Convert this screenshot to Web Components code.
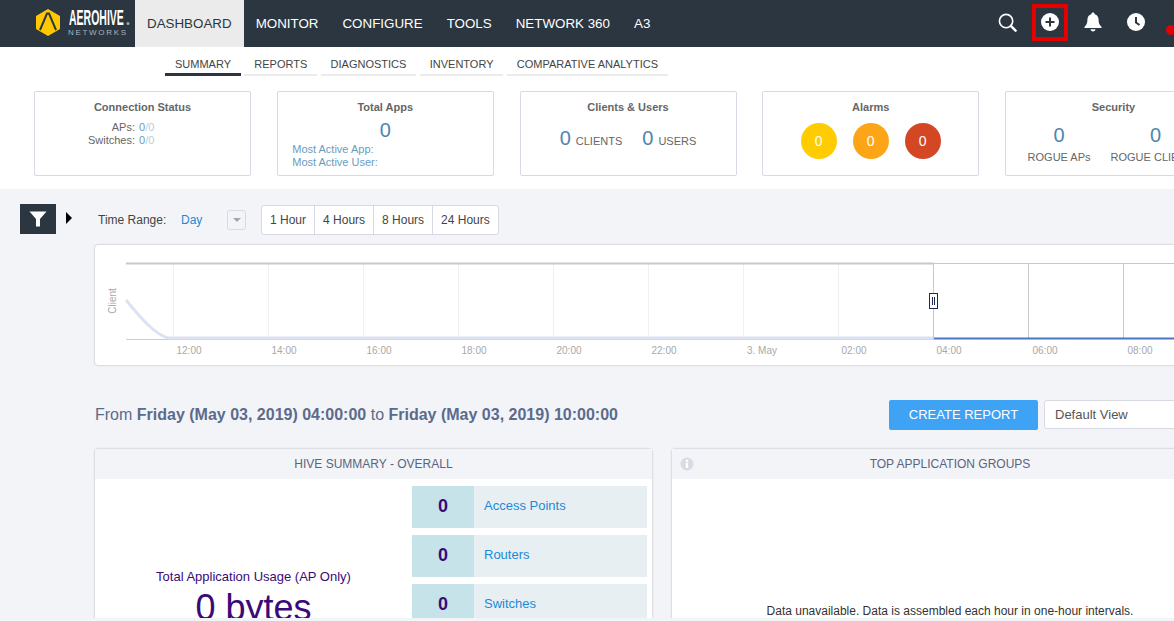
<!DOCTYPE html>
<html>
<head>
<meta charset="utf-8">
<title>Dashboard</title>
<style>
    html, body { margin: 0; height: 100%; overflow: hidden; }
    body { font-family: "Liberation Sans", Arial, sans-serif; background: #f3f4f8; }
</style>
</head>
<body>
<hive-app></hive-app>

<script>
class TopBar extends HTMLElement {
    constructor() {
        super();
        this.attachShadow({ mode: 'open' });
        this.shadowRoot.innerHTML = `
            <style>
                :host { display: flex; height: 47px; background: #2b3640; align-items: stretch; }
                .logo { width: 135px; flex: none; }
                .logo svg { display: block; }
                nav { display: flex; }
                a {
                    padding: 0 12px;
                    color: #fff;
                    font-size: 13.37px;
                    line-height: 47px;
                    white-space: nowrap;
                }
                a.on { background: #ebebeb; color: #2b3640; }
                .icons { margin-left: auto; display: flex; align-items: center; }
                .icon { width: 43px; display: flex; justify-content: center; align-items: center; height: 47px; box-sizing: border-box; padding-bottom: 3px; }
                .icon.marked { position: relative; }
                .icon.marked::after {
                    content: '';
                    position: absolute;
                    left: 3.5px; top: 4px;
                    width: 36px; height: 37px;
                    box-sizing: border-box;
                    border: 4px solid #e60000;
                }
                .dot { width: 16.5px; height: 47px; position: relative; overflow: hidden; }
                .dot::after {
                    content: '';
                    position: absolute;
                    left: 8.5px; top: 25px;
                    width: 10px; height: 10px;
                    border-radius: 50%;
                    background: #e60000;
                }
            </style>
            <div class="logo">
                <svg width="135" height="47" viewBox="0 0 135 47">
                    <polygon points="48,9 60,16 60,29 48,36 36,29 36,16" fill="#ffc800"/>
                    <path d="M40 30 L47 13.5 H49 L56 30" fill="none" stroke="#2b3640" stroke-width="2"/>
                    <text transform="translate(69 25) scale(1.05 2.2)" fill="#fff" font-family="Liberation Sans" font-weight="bold" font-size="10">AEROHIVE</text>
                    <circle cx="128" cy="23.5" r="1.5" fill="#9aa"/>
                    <text x="68" y="35" fill="#aeb3b8" font-family="Liberation Sans" font-size="8" letter-spacing="1.7">NETWORKS</text>
                </svg>
            </div>
            <nav>
                <a class="on">DASHBOARD</a>
                <a>MONITOR</a>
                <a>CONFIGURE</a>
                <a>TOOLS</a>
                <a>NETWORK 360</a>
                <a>A3</a>
            </nav>
            <div class="icons">
                <div class="icon">
                    <svg width="19" height="19" viewBox="0 0 20 20" fill="none" stroke="#fff">
                        <circle cx="8.5" cy="8.5" r="7" stroke-width="1.7"/>
                        <path d="M13.5 13.5 L18.5 18.5" stroke-width="2.6" stroke-linecap="round"/>
                    </svg>
                </div>
                <div class="icon marked">
                    <svg width="18" height="18" viewBox="0 0 18 18">
                        <circle cx="9" cy="9" r="9" fill="#fff"/>
                        <path d="M9 4.5 V13.5 M4.5 9 H13.5" stroke="#2b3640" stroke-width="2"/>
                    </svg>
                </div>
                <div class="icon">
                    <svg width="18" height="20" viewBox="0 0 18 20" fill="#fff">
                        <path d="M9 0.5 C10 0.5 10.6 1.2 10.6 2.2 C13.4 2.9 14.6 5 14.6 8 C14.6 11.5 15.6 13 17.5 14.8 V16 H0.5 V14.8 C2.4 13 3.4 11.5 3.4 8 C3.4 5 4.6 2.9 7.4 2.2 C7.4 1.2 8 0.5 9 0.5 Z"/>
                        <path d="M6.5 17.3 H11.5 C11.3 18.6 10.3 19.5 9 19.5 C7.7 19.5 6.7 18.6 6.5 17.3 Z"/>
                    </svg>
                </div>
                <div class="icon">
                    <svg width="18" height="18" viewBox="0 0 18 18">
                        <circle cx="9" cy="9" r="9" fill="#fff"/>
                        <path d="M9 4 V9.5 L12.5 12" stroke="#2b3640" stroke-width="2" fill="none"/>
                    </svg>
                </div>
                <div class="dot"></div>
            </div>
        `;
    }
}

class SubNav extends HTMLElement {
    constructor() {
        super();
        this.attachShadow({ mode: 'open' });
        this.shadowRoot.innerHTML = `
            <style>
                :host { display: flex; gap: 3.3px; padding-left: 165px; height: 29px; background: #fff; }
                a {
                    padding: 11px 10px 0;
                    font-size: 11px;
                    line-height: 13px;
                    color: #444;
                    border-bottom: 2px solid #ebebeb;
                    box-sizing: border-box;
                    height: 29px;
                    white-space: nowrap;
                }
                a.on { border-bottom: 3px solid #2b3640; }
            </style>
            <a class="on">SUMMARY</a>
            <a>REPORTS</a>
            <a>DIAGNOSTICS</a>
            <a>INVENTORY</a>
            <a>COMPARATIVE ANALYTICS</a>
        `;
    }
}

class SummaryCard extends HTMLElement {
    constructor() {
        super();
        this.attachShadow({ mode: 'open' });
        this.shadowRoot.innerHTML = `
            <style>
                :host {
                    display: block;
                    flex: none;
                    width: 217px;
                    height: 85px;
                    box-sizing: border-box;
                    border: 1px solid #d9d9e6;
                    border-radius: 2px;
                    background: #fff;
                    padding-top: 9px;
                    color: #666;
                    font-size: 11px;
                }
                h3 {
                    margin: 0;
                    font-size: 11px;
                    line-height: 13px;
                    font-weight: bold;
                    text-align: center;
                    color: #666;
                }
            </style>
            <h3></h3>
            <slot></slot>
        `;
    }

    connectedCallback() {
        this.shadowRoot.querySelector('h3').textContent = this.getAttribute('title');
    }
}

class SummaryStrip extends HTMLElement {
    constructor() {
        super();
        this.attachShadow({ mode: 'open' });
        this.shadowRoot.innerHTML = `
            <style>
                :host { display: flex; gap: 25.75px; padding: 15px 0 13px 34px; background: #fff; overflow: hidden; }
                .status { display: grid; grid-template-columns: 100px auto; column-gap: 4px; margin-top: 7px; line-height: 13px; }
                .status span:nth-child(odd) { text-align: right; }
                .val { color: #6a9cc0; }
                .val i { font-style: normal; color: #b4cfe0; }
                .big { font-size: 20px; color: #4f86ad; }
                .apps { text-align: center; line-height: 23px; margin-top: 5px; }
                .links { padding-left: 14.5px; color: #6a9cc0; line-height: 13px; margin-top: 1px; }
                .pair { display: flex; justify-content: center; align-items: center; gap: 20px; margin-top: 13px; height: 23px; }
                .pair span { display: flex; align-items: baseline; gap: 5px; }
                .alarms { display: flex; justify-content: center; gap: 16px; margin-top: 9px; }
                .alarms b {
                    width: 36px; height: 36px;
                    border-radius: 50%;
                    color: #fff;
                    font-weight: normal;
                    font-size: 14px;
                    line-height: 36px;
                    text-align: center;
                }
                .rogue { display: flex; justify-content: center; gap: 20px; margin-top: 10px; padding-left: 1px; text-align: center; white-space: nowrap; }
                .rogue .big { display: block; line-height: 23px; margin-bottom: 4px; }
            </style>
            <summary-card title="Connection Status">
                <div class="status">
                    <span>APs:</span><span class="val">0<i>/0</i></span>
                    <span>Switches:</span><span class="val">0<i>/0</i></span>
                </div>
            </summary-card>
            <summary-card title="Total Apps">
                <div class="big apps">0</div>
                <div class="links">Most Active App:<br>Most Active User:</div>
            </summary-card>
            <summary-card title="Clients &amp; Users">
                <div class="pair">
                    <span><span class="big">0</span>CLIENTS</span>
                    <span><span class="big">0</span>USERS</span>
                </div>
            </summary-card>
            <summary-card title="Alarms">
                <div class="alarms">
                    <b style="background:#ffcc00">0</b>
                    <b style="background:#fca617">0</b>
                    <b style="background:#d34725">0</b>
                </div>
            </summary-card>
            <summary-card title="Security">
                <div class="rogue">
                    <div><span class="big">0</span>ROGUE APs</div>
                    <div><span class="big">0</span>ROGUE CLIENTS</div>
                </div>
            </summary-card>
        `;
    }
}

class TimeRange extends HTMLElement {
    constructor() {
        super();
        this.attachShadow({ mode: 'open' });
        this.shadowRoot.innerHTML = `
            <style>
                :host { display: flex; align-items: center; height: 31px; font-size: 12px; color: #444; padding-top: 1px; box-sizing: border-box; }
                .label { width: 83px; }
                .day { width: 46px; color: #1b8ad6; }
                .drop {
                    width: 19px; height: 20px;
                    box-sizing: border-box;
                    border: 1px solid #d9d9e6;
                    border-radius: 3px;
                    background: #f3f4f8;
                    margin-right: 15px;
                    display: flex;
                    align-items: center;
                    justify-content: center;
                }
                .drop::after {
                    content: '';
                    border: 4px solid transparent;
                    border-top: 4px solid #a4a4b0;
                    border-bottom: 0;
                }
                .group { display: flex; height: 30px; box-sizing: border-box; border: 1px solid #d9d9e6; border-radius: 3px; background: #fff; }
                .group span { padding: 0 8px; line-height: 28px; border-left: 1px solid #d9d9e6; }
                .group span:first-child { border-left: 0; }
            </style>
            <span class="label">Time Range:</span>
            <span class="day">Day</span>
            <span class="drop"></span>
            <div class="group">
                <span>1 Hour</span><span>4 Hours</span><span>8 Hours</span><span>24 Hours</span>
            </div>
        `;
    }
}

class TimeChart extends HTMLElement {
    constructor() {
        super();
        this.attachShadow({ mode: 'open' });
        const labels = [['12:00', 95], ['14:00', 190], ['16:00', 285], ['18:00', 380], ['20:00', 475],
            ['22:00', 570], ['3. May', 668], ['02:00', 760], ['04:00', 855], ['06:00', 951], ['08:00', 1046]];
        const left = [79, 174, 269, 364, 459, 554, 649, 744];
        this.shadowRoot.innerHTML = `
            <style>
                :host {
                    display: block;
                    width: 1099px;
                    height: 120px;
                    background: #fff;
                    border-radius: 3px;
                    box-shadow: 0 0 2px rgba(60, 60, 80, .45);
                    margin: 10px 0 0 1px;
                }
                svg { display: block; }
                text { font-family: "Liberation Sans", Arial, sans-serif; font-size: 10px; fill: #a8a8a8; }
            </style>
            <svg width="1099" height="120" viewBox="1 1 1099 120">
                ${left.map(x => `<path d="M${x + .5} 19 V95" stroke="#f0f0f2"/>`).join('')}
                <path d="M839.5 19 V95 M934.5 19 V95 M1029.5 19 V95" stroke="#c8c8c8"/>
                <path d="M32 19.5 H840" stroke="#c8c8c8" stroke-width="2"/>
                <path d="M840 19.5 H1100" stroke="#c8c8c8"/>
                <path d="M32 95.5 H840" stroke="#c9cce4"/>
                <path d="M32 56 C45 72 60 90 74 94 H839" stroke="#dbe2f2" stroke-width="3" fill="none"/>
                <path d="M840 94.5 H1100" stroke="#4a76c6" stroke-width="2"/>
                <rect x="835.5" y="49.5" width="8" height="15" fill="#fff" stroke="#1d2c50"/>
                <path d="M838.5 53 V61 M840.5 53 V61" stroke="#1d2c50"/>
                <text transform="translate(22 57) rotate(-90)" text-anchor="middle">Client</text>
                ${labels.map(l => `<text x="${l[1]}" y="110" text-anchor="middle">${l[0]}</text>`).join('')}
            </svg>
        `;
    }
}

class PanelBox extends HTMLElement {
    constructor() {
        super();
        this.attachShadow({ mode: 'open' });
        this.shadowRoot.innerHTML = `
            <style>
                :host {
                    display: block;
                    flex: none;
                    width: 557px;
                    height: 200px;
                    background: #fff;
                    border-radius: 3px 3px 0 0;
                    box-shadow: 0 0 2px rgba(60, 60, 80, .45);
                    position: relative;
                }
                header {
                    height: 30px;
                    line-height: 30px;
                    background: #f3f4f8;
                    text-align: center;
                    font-size: 12px;
                    color: #5a6480;
                }
                ::slotted([slot="corner"]) { position: absolute; left: 8px; top: 8px; }
            </style>
            <header></header>
            <slot name="corner"></slot>
            <slot></slot>
        `;
    }

    connectedCallback() {
        this.shadowRoot.querySelector('header').textContent = this.getAttribute('title');
    }
}

class StatRow extends HTMLElement {
    constructor() {
        super();
        this.attachShadow({ mode: 'open' });
        this.shadowRoot.innerHTML = `
            <style>
                :host { display: flex; height: 42px; background: #e8eff2; font-size: 13px; color: #1b8ad6; line-height: 40px; }
                b { width: 62px; background: #c5e3e8; color: #3a0a78; font-size: 18px; line-height: 40px; text-align: center; margin-right: 10px; }
            </style>
            <b>0</b><slot></slot>
        `;
    }
}

class ReportArea extends HTMLElement {
    constructor() {
        super();
        this.attachShadow({ mode: 'open' });
        this.shadowRoot.innerHTML = `
            <style>
                :host { display: block; margin-top: 35px; width: 1100px; }
                .top { display: flex; align-items: flex-start; height: 49px; }
                .from { flex: none; width: 794px; padding-left: 1px; font-size: 16px; line-height: 30px; color: #5b6b8c; white-space: nowrap; }
                .btn {
                    flex: none;
                    width: 149px; height: 30px;
                    background: #3ea2f5;
                    color: #fff;
                    font-size: 13px;
                    line-height: 30px;
                    text-align: center;
                    border-radius: 2px;
                    margin-right: 6px;
                }
                .select {
                    flex: none;
                    width: 200px; height: 29px;
                    box-sizing: border-box;
                    border: 1px solid #d9d9e6;
                    border-radius: 3px;
                    background: #fff;
                    color: #555;
                    font-size: 13px;
                    line-height: 27px;
                    padding-left: 10px;
                }
                .panels { display: flex; gap: 19.5px; padding-left: 1px; }
                .hive { display: flex; }
                .usage { width: 317px; text-align: center; color: #3a0a78; padding-top: 90px; font-size: 13px; line-height: 15px; }
                .usage div { font-size: 36px; line-height: 44px; margin-top: 2px; }
                .rows { display: flex; flex-direction: column; gap: 7px; padding-top: 7px; width: 235px; }
                .empty { text-align: center; font-size: 12px; color: #333; padding-top: 125px; line-height: 14px; }
            </style>
            <div class="top">
                <div class="from">From <b>Friday (May 03, 2019) 04:00:00</b> to <b>Friday (May 03, 2019) 10:00:00</b></div>
                <div class="btn">CREATE REPORT</div>
                <div class="select">Default View</div>
            </div>
            <div class="panels">
                <panel-box title="HIVE SUMMARY - OVERALL">
                    <div class="hive">
                        <div class="usage">Total Application Usage (AP Only)<div>0 bytes</div></div>
                        <div class="rows">
                            <stat-row>Access Points</stat-row>
                            <stat-row>Routers</stat-row>
                            <stat-row>Switches</stat-row>
                        </div>
                    </div>
                </panel-box>
                <panel-box title="TOP APPLICATION GROUPS">
                    <svg slot="corner" width="14" height="14" viewBox="0 0 14 14">
                        <circle cx="7" cy="7" r="6.5" fill="#d9dae6"/>
                        <rect x="5.8" y="6" width="2.4" height="5" fill="#fff"/>
                        <circle cx="7" cy="3.9" r="1.3" fill="#fff"/>
                    </svg>
                    <div class="empty">Data unavailable. Data is assembled each hour in one-hour intervals.</div>
                </panel-box>
            </div>
        `;
    }
}

class HiveApp extends HTMLElement {
    constructor() {
        super();
        this.attachShadow({ mode: 'open' });
        this.shadowRoot.innerHTML = `
            <style>
                :host {
                    display: grid;
                    grid-template-rows: 1fr 3px;
                    height: 621px;
                    width: 1174px;
                    overflow: hidden;
                    background: #f3f4f8;
                }
                .page { overflow: hidden; min-height: 0; }
                main { display: flex; padding-top: 15px; }
                .rail { width: 94px; flex: none; padding-left: 20px; display: flex; box-sizing: border-box; }
                .filter { width: 36px; height: 30px; background: #2b3640; display: flex; align-items: center; justify-content: center; }
                .arrow {
                    margin: 8px 0 0 10px;
                    width: 0; height: 0;
                    border-left: 6px solid #000;
                    border-top: 6px solid transparent;
                    border-bottom: 6px solid transparent;
                }
                .col { flex: none; width: 1100px; }
                time-range { margin-left: 4px; }
            </style>
            <div class="page">
                <top-bar></top-bar>
                <sub-nav></sub-nav>
                <summary-strip></summary-strip>
                <main>
                    <div class="rail">
                        <div class="filter">
                            <svg width="18" height="16" viewBox="0 0 18 16"><path d="M0.5 0.5 H17.5 L11 8 V15.5 H7 V8 Z" fill="#fff"/></svg>
                        </div>
                        <div class="arrow"></div>
                    </div>
                    <div class="col">
                        <time-range></time-range>
                        <time-chart></time-chart>
                        <report-area></report-area>
                    </div>
                </main>
            </div>
            <div></div>
        `;
    }
}

customElements.define('top-bar', TopBar);
customElements.define('sub-nav', SubNav);
customElements.define('summary-card', SummaryCard);
customElements.define('summary-strip', SummaryStrip);
customElements.define('time-range', TimeRange);
customElements.define('time-chart', TimeChart);
customElements.define('panel-box', PanelBox);
customElements.define('stat-row', StatRow);
customElements.define('report-area', ReportArea);
customElements.define('hive-app', HiveApp);
</script>
</body>
</html>
